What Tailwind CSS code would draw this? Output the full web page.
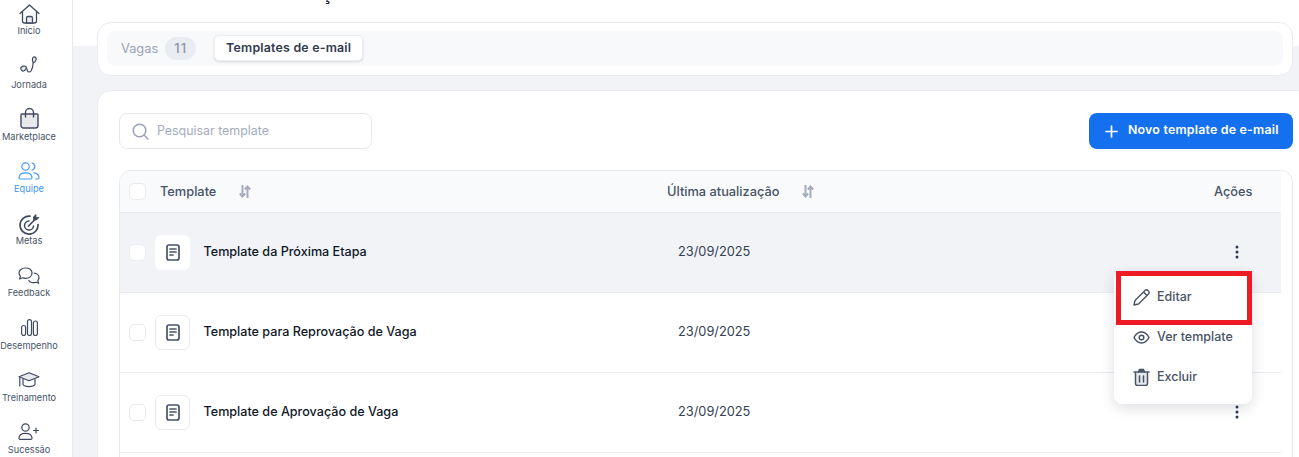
<!DOCTYPE html>
<html lang="pt-BR">
<head>
    <meta charset="UTF-8">
    <meta name="viewport" content="width=device-width, initial-scale=1.0">
    <title>Templates de e-mail</title>
    <script src="https://cdn.jsdelivr.net/npm/@tailwindcss/browser@4"></script>
</head>
<body class="bg-white overflow-hidden font-['Inter',sans-serif]">
<div class="relative flex w-[1299px] h-[457px] overflow-hidden">

    <!-- Sidebar -->
    <aside class="w-[73px] h-full shrink-0 bg-white border-r border-[#e9ebf0] pr-[14px] flex flex-col items-center text-[9.2px] leading-[12px] text-[#475467]">
        <a class="h-[37px] w-full flex flex-col items-center justify-end">
            <svg class="mb-[1px] w-[21px] h-[20px]" viewBox="0 0 21 20" fill="none" stroke="#3f4a61" stroke-width="1.300" stroke-linejoin="round" stroke-linecap="round"><path d="M1 9.500 10.500 1 20 9.500"/><path d="M3.500 8v9a2 2 0 0 0 2 2h10a2 2 0 0 0 2-2V8"/><path d="M7.500 19v-5a1.500 1.500 0 0 1 1.500-1.500h3a1.500 1.500 0 0 1 1.500 1.500v5Z" fill="#e8e9ed"/></svg>
            <span>Início</span>
        </a>
        <a class="h-[54px] w-full flex flex-col items-center justify-end">
            <svg class="mb-[6px] w-[18px] h-[17px]" viewBox="0 0 18 17" fill="none" stroke="#3f4a61" stroke-width="1.200" stroke-linecap="round"><path d="M13.500 1c1.800-.4 3 .8 2.700 2.500-.3 1.500-1.500 2.800-2.900 3.300-.9-1.200-1.500-4.800.2-5.800Z" fill="#e8e9ed"/><path d="M13.200 7c-.2 3-1 6-2.200 8-.9 1.300-3 1.300-3.500 0-.4-1-.2-2-.9-2.500"/><path d="M1 11.500c.8-1.500 4-2 5-.8.800 1-.5 3.800-2.300 4.300-1.700.4-3.400-1.700-2.700-3.500Z" fill="#e8e9ed"/></svg>
            <span>Jornada</span>
        </a>
        <a class="h-[52px] w-full flex flex-col items-center justify-end">
            <svg class="mb-[2px] w-[19px] h-[21px]" viewBox="0 0 19 21" fill="none" stroke="#3f4a61" stroke-width="1.400"><path d="M2 6h15a1 1 0 0 1 1 1v10.500a2.500 2.500 0 0 1-2.500 2.500h-12A2.500 2.500 0 0 1 1 17.500V7a1 1 0 0 1 1-1Z" fill="#e8e9ed"/><path d="M5.500 9V4.500a4 4 0 0 1 8 0V9" stroke-linecap="round"/></svg>
            <span>Marketplace</span>
        </a>
        <a class="h-[52px] w-full flex flex-col items-center justify-end text-[#3b93f5]">
            <svg class="mb-[3px] w-[22px] h-[18px]" viewBox="0 0 22 18" fill="none" stroke="#4a9bf5" stroke-width="1.200" stroke-linecap="round"><circle cx="7.500" cy="4.500" r="3.700"/><path d="M1 15.800c0-3.300 2.500-5 6.500-5s6.500 1.700 6.500 5c0 .8-.5 1.200-1 1.200H2c-.5 0-1-.4-1-1.200Z"/><path d="M14 1a3.600 3.600 0 0 1 0 7"/><path d="M16 10.800c3 .4 5 2 5 5 0 .8-.4 1.200-1 1.200h-2.500"/></svg>
            <span>Equipe</span>
        </a>
        <a class="h-[52px] w-full flex flex-col items-center justify-end">
            <svg class="mb-[-1px] w-[21px] h-[23px]" viewBox="0 0 21 23" fill="none" stroke="#3f4a61" stroke-width="1.700" stroke-linecap="round"><path d="M19 11.500A9 9 0 1 1 11 3.200"/><path d="M14.500 13a4.500 4.500 0 1 1-4.500-5" stroke-width="1.500"/><path d="M9.500 13 16.500 6"/><path d="M14.500 6.500V3.800L17 1.500v3h3l-2.500 2.500h-3Z" fill="#3f4a61" stroke-width=".8"/></svg>
            <span>Metas</span>
        </a>
        <a class="h-[52px] w-full flex flex-col items-center justify-end">
            <svg class="mb-[3px] w-[22px] h-[17px]" viewBox="0 0 22 17" fill="none" stroke="#3f4a61" stroke-width="1.200" stroke-linejoin="round"><path d="M7.500 1C3.500 1 1 3.200 1 6c0 1.300.6 2.500 1.500 3.300L1.500 12l3.200-1.200c.8.300 1.700.5 2.800.5 4 0 6.500-2.300 6.500-5.300S11.500 1 7.500 1Z"/><path d="M15.500 6c3 .3 5.500 1.800 5.500 4.800 0 1.100-.5 2.100-1.200 2.900l.9 2.500-2.700-1c-2.500 1-6 .5-7.500-2"/></svg>
            <span>Feedback</span>
        </a>
        <a class="h-[53px] w-full flex flex-col items-center justify-end">
            <svg class="mb-[4px] w-[17px] h-[17px]" viewBox="0 0 17 17" fill="none" stroke="#3f4a61" stroke-width="1.200"><rect x=".6" y="6.500" width="4" height="10" rx="2"/><rect x="6.500" y=".6" width="4" height="15.900" rx="2"/><rect x="12.400" y="2" width="4" height="14.500" rx="2"/></svg>
            <span>Desempenho</span>
        </a>
        <a class="h-[52px] w-full flex flex-col items-center justify-end">
            <svg class="mb-[4px] w-[22px] h-[16px]" viewBox="0 0 22 16" fill="none" stroke="#3f4a61" stroke-width="1.200" stroke-linejoin="round"><path d="M11 .8 1 4.800l10 4 10-4-10-4Z" fill="#e8e9ed"/><path d="M5 7v5.500c1.500 2.500 10 3 12 0V7"/><path d="M1.800 5.500v8.500" stroke-linecap="round"/></svg>
            <span>Treinamento</span>
        </a>
        <a class="h-[52px] w-full flex flex-col items-center justify-end">
            <svg class="mb-[4px] w-[22px] h-[17px]" viewBox="0 0 22 17" fill="none" stroke="#3f4a61" stroke-width="1.200" stroke-linecap="round"><circle cx="7.500" cy="4.500" r="3.700"/><path d="M1 15.300c0-3.200 2.500-5 6.500-5s6.500 1.800 6.500 5c0 .8-.5 1.100-1 1.100H2c-.5 0-1-.3-1-1.100Z"/><path d="M18 5v5M15.500 7.500h5"/></svg>
            <span>Sucessão</span>
        </a>
    </aside>

    <!-- Main -->
    <main class="flex-1 min-w-0 bg-[#f1f3f7] relative">
        <div class="h-[46px] bg-white overflow-hidden pl-[48px]">
            <h1 class="mt-[-17px] text-[20px] leading-[20px] font-semibold text-[#1f2937] whitespace-nowrap">Recrutamento e Seleção</h1>
        </div>

        <!-- Tabs card -->
        <section class="mt-[-24px] ml-[24px] mr-[6px] h-[54px] bg-white border border-[#e9ebf0] rounded-[14px] pt-[8px] pl-[9px] pr-[9px] relative">
            <div class="h-[35px] bg-[#f8f9fb] rounded-[8px] flex items-center pl-[14px] w-full">
                <span class="text-[12.8px] text-[#9aa3b5]">Vagas</span>
                <span class="ml-[7px] w-[31px] h-[23px] rounded-full bg-[#e9ecf1] text-[#8d96a8] text-[13px] font-medium flex items-center justify-center tracking-[1px]">11</span>
                <span class="ml-[18px] w-[149px] h-[26px] mt-[-1px] bg-white rounded-[5px] border border-[#eceef2] shadow-sm text-[12.4px] font-semibold text-[#2f3a4f] flex items-center justify-center tracking-[0.2px]">Templates de e-mail</span>
            </div>
        </section>

        <!-- Content card -->
        <section class="mt-[14px] ml-[24px] mr-[-12px] h-[400px] bg-white border border-[#e9ebf0] rounded-[14px] pt-[22px] pl-[21px] pr-[17px]">
            <div class="flex items-center justify-between">
                <div class="w-[253px] h-[36px] border border-[#e7e9ee] rounded-[8px] flex items-center pl-[12px]">
                    <svg class="w-[17px] h-[17px]" viewBox="0 0 17 17" fill="none" stroke="#98a2b3" stroke-width="1.500" stroke-linecap="round"><circle cx="7.500" cy="7.500" r="6.300"/><path d="m12.300 12.300 3.700 3.700"/></svg>
                    <span class="ml-[8px] mt-[1px] text-[12.4px] text-[#a3acbd]">Pesquisar template</span>
                </div>
                <button class="w-[204px] h-[36px] bg-[#1570ef] rounded-[8px] flex items-center pl-[16px] text-white text-[12.4px] font-semibold tracking-[0.2px]">
                    <svg class="w-[13px] h-[13px] mr-[10px]" viewBox="0 0 13 13" fill="none" stroke="#fff" stroke-width="1.700" stroke-linecap="round"><path d="M6.500 1v11M1 6.500h11"/></svg>
                    <span class="mt-[-1px]">Novo template de e-mail</span>
                </button>
            </div>

            <!-- Table -->
            <div class="mt-[21px] w-[1174px] h-[400px] border border-[#e9ebf0] rounded-[12px] overflow-hidden pr-[11px]">
                <div class="h-[41px] bg-[#f9fafc] border-b border-[#e9ebf0] flex items-center text-[12.8px] font-medium text-[#475467] box-content">
                    <span class="ml-[9px] w-[17px] h-[17px] bg-white border border-[#e9ebf0] rounded-[5px]"></span>
                    <span class="ml-[14px]">Template</span>
                    <svg class="ml-[23px] w-[12px] h-[13px]" viewBox="0 0 12 13" fill="none" stroke="#a5adbb" stroke-width="2"><path d="M3.500 0v11M.8 8.500l2.700 3 2.700-3"/><path d="M8.500 13V2M5.800 4.500l2.700-3 2.700 3"/></svg>
                    <span class="absolute left-[594px]">Última atualização</span>
                    <svg class="absolute left-[729px] w-[12px] h-[13px]" viewBox="0 0 12 13" fill="none" stroke="#a5adbb" stroke-width="2"><path d="M3.500 0v11M.8 8.500l2.700 3 2.700-3"/><path d="M8.500 13V2M5.800 4.500l2.700-3 2.700 3"/></svg>
                    <span class="absolute left-[1141px]">Ações</span>
                </div>

                <div class="h-[80px] bg-[#f1f3f7] border-b border-[#e9ebf0] flex items-center">
                    <span class="ml-[9px] w-[17px] h-[17px] bg-white border border-[#e9ebf0] rounded-[5px]"></span>
                    <span class="ml-[9px] w-[35px] h-[35px] bg-white rounded-[6px] flex items-center justify-center">
                        <svg class="w-[14px] h-[17px]" viewBox="0 0 14 17" fill="none" stroke="#475467" stroke-width="1.700" stroke-linecap="round"><rect x="1" y="1" width="12" height="15" rx="2"/><path d="M4 5h6M4 8h6M4 11h3"/></svg>
                    </span>
                    <span class="ml-[13.500px] text-[12.6px] font-medium text-[#101828]">Template da Próxima Etapa</span>
                    <span class="absolute left-[605px] mt-[-1px] text-[12.8px] text-[#344054]">23/09/2025</span>
                    <svg class="absolute left-[1162px] mt-[-2px] w-[4px] h-[14px]" viewBox="0 0 4 14" fill="#2b3a55"><circle cx="2" cy="2" r="1.500"/><circle cx="2" cy="7" r="1.500"/><circle cx="2" cy="12" r="1.500"/></svg>
                </div>

                <div class="h-[80px] bg-white border-b border-[#e9ebf0] flex items-center">
                    <span class="ml-[9px] w-[17px] h-[17px] bg-white border border-[#e9ebf0] rounded-[5px]"></span>
                    <span class="ml-[9px] w-[35px] h-[35px] bg-white border border-[#e9ebf0] rounded-[6px] flex items-center justify-center">
                        <svg class="w-[14px] h-[17px]" viewBox="0 0 14 17" fill="none" stroke="#475467" stroke-width="1.700" stroke-linecap="round"><rect x="1" y="1" width="12" height="15" rx="2"/><path d="M4 5h6M4 8h6M4 11h3"/></svg>
                    </span>
                    <span class="ml-[13.500px] text-[12.6px] font-medium text-[#101828]">Template para Reprovação de Vaga</span>
                    <span class="absolute left-[605px] mt-[-1px] text-[12.8px] text-[#344054]">23/09/2025</span>
                </div>

                <div class="h-[80px] bg-white border-b border-[#e9ebf0] flex items-center">
                    <span class="ml-[9px] w-[17px] h-[17px] bg-white border border-[#e9ebf0] rounded-[5px]"></span>
                    <span class="ml-[9px] w-[35px] h-[35px] bg-white border border-[#e9ebf0] rounded-[6px] flex items-center justify-center">
                        <svg class="w-[14px] h-[17px]" viewBox="0 0 14 17" fill="none" stroke="#475467" stroke-width="1.700" stroke-linecap="round"><rect x="1" y="1" width="12" height="15" rx="2"/><path d="M4 5h6M4 8h6M4 11h3"/></svg>
                    </span>
                    <span class="ml-[13.500px] text-[12.6px] font-medium text-[#101828]">Template de Aprovação de Vaga</span>
                    <span class="absolute left-[605px] mt-[-1px] text-[12.8px] text-[#344054]">23/09/2025</span>
                    <svg class="absolute left-[1162px] mt-[-2px] w-[4px] h-[14px]" viewBox="0 0 4 14" fill="#2b3a55"><circle cx="2" cy="2" r="1.500"/><circle cx="2" cy="7" r="1.500"/><circle cx="2" cy="12" r="1.500"/></svg>
                </div>
            </div>
        </section>
    </main>

    <!-- Dropdown menu -->
    <div class="absolute left-[1114px] top-[271px] w-[138px] h-[133px] bg-white rounded-[8px] shadow-[0_4px_14px_rgba(16,24,40,0.14)] text-[12.5px] text-[#475467] font-medium pt-[7px]">
        <div class="h-[39px] flex items-center pl-[19px]">
            <svg class="w-[17px] h-[17px] mr-[7px]" viewBox="0 0 17 17" fill="none" stroke="#475467" stroke-width="1.400" stroke-linejoin="round"><path d="M1 16l1-4.500L12 1.500a2 2 0 0 1 3 0l.5.5a2 2 0 0 1 0 3L5.500 15 1 16Z"/><path d="m10.500 3 3.500 3.500"/></svg>
            Editar
        </div>
        <div class="h-[40px] pt-[1px] flex items-center pl-[19px]">
            <svg class="w-[17px] h-[13px] mr-[7px]" viewBox="0 0 17 13" fill="none" stroke="#475467" stroke-width="1.500"><path d="M1 6.500C3 2.800 5.500 1 8.500 1S14 2.800 16 6.500C14 10.200 11.500 12 8.500 12S3 10.200 1 6.500Z"/><circle cx="8.500" cy="6.500" r="2.300"/></svg>
            Ver template
        </div>
        <div class="h-[40px] flex items-center pl-[19px]">
            <svg class="w-[17px] h-[18px] mr-[7px]" viewBox="0 0 17 18" fill="none" stroke="#475467" stroke-width="1.500" stroke-linecap="round"><path d="M2.500 5v10.500a2 2 0 0 0 2 2h8a2 2 0 0 0 2-2V5" fill="#e4e7ec"/><path d="M1 4h15"/><path d="M5.500 4 6.500 1.500h4L11.500 4" fill="#475467"/><path d="M6.500 8v6M10.500 8v6"/></svg>
            Excluir
        </div>
    </div>

    <!-- Red highlight over the menu -->
    <div class="absolute left-[1116px] top-[271px] w-[136px] h-[54px] border-[5px] border-[#ed1c24]"></div>
</div>
</body>
</html>
